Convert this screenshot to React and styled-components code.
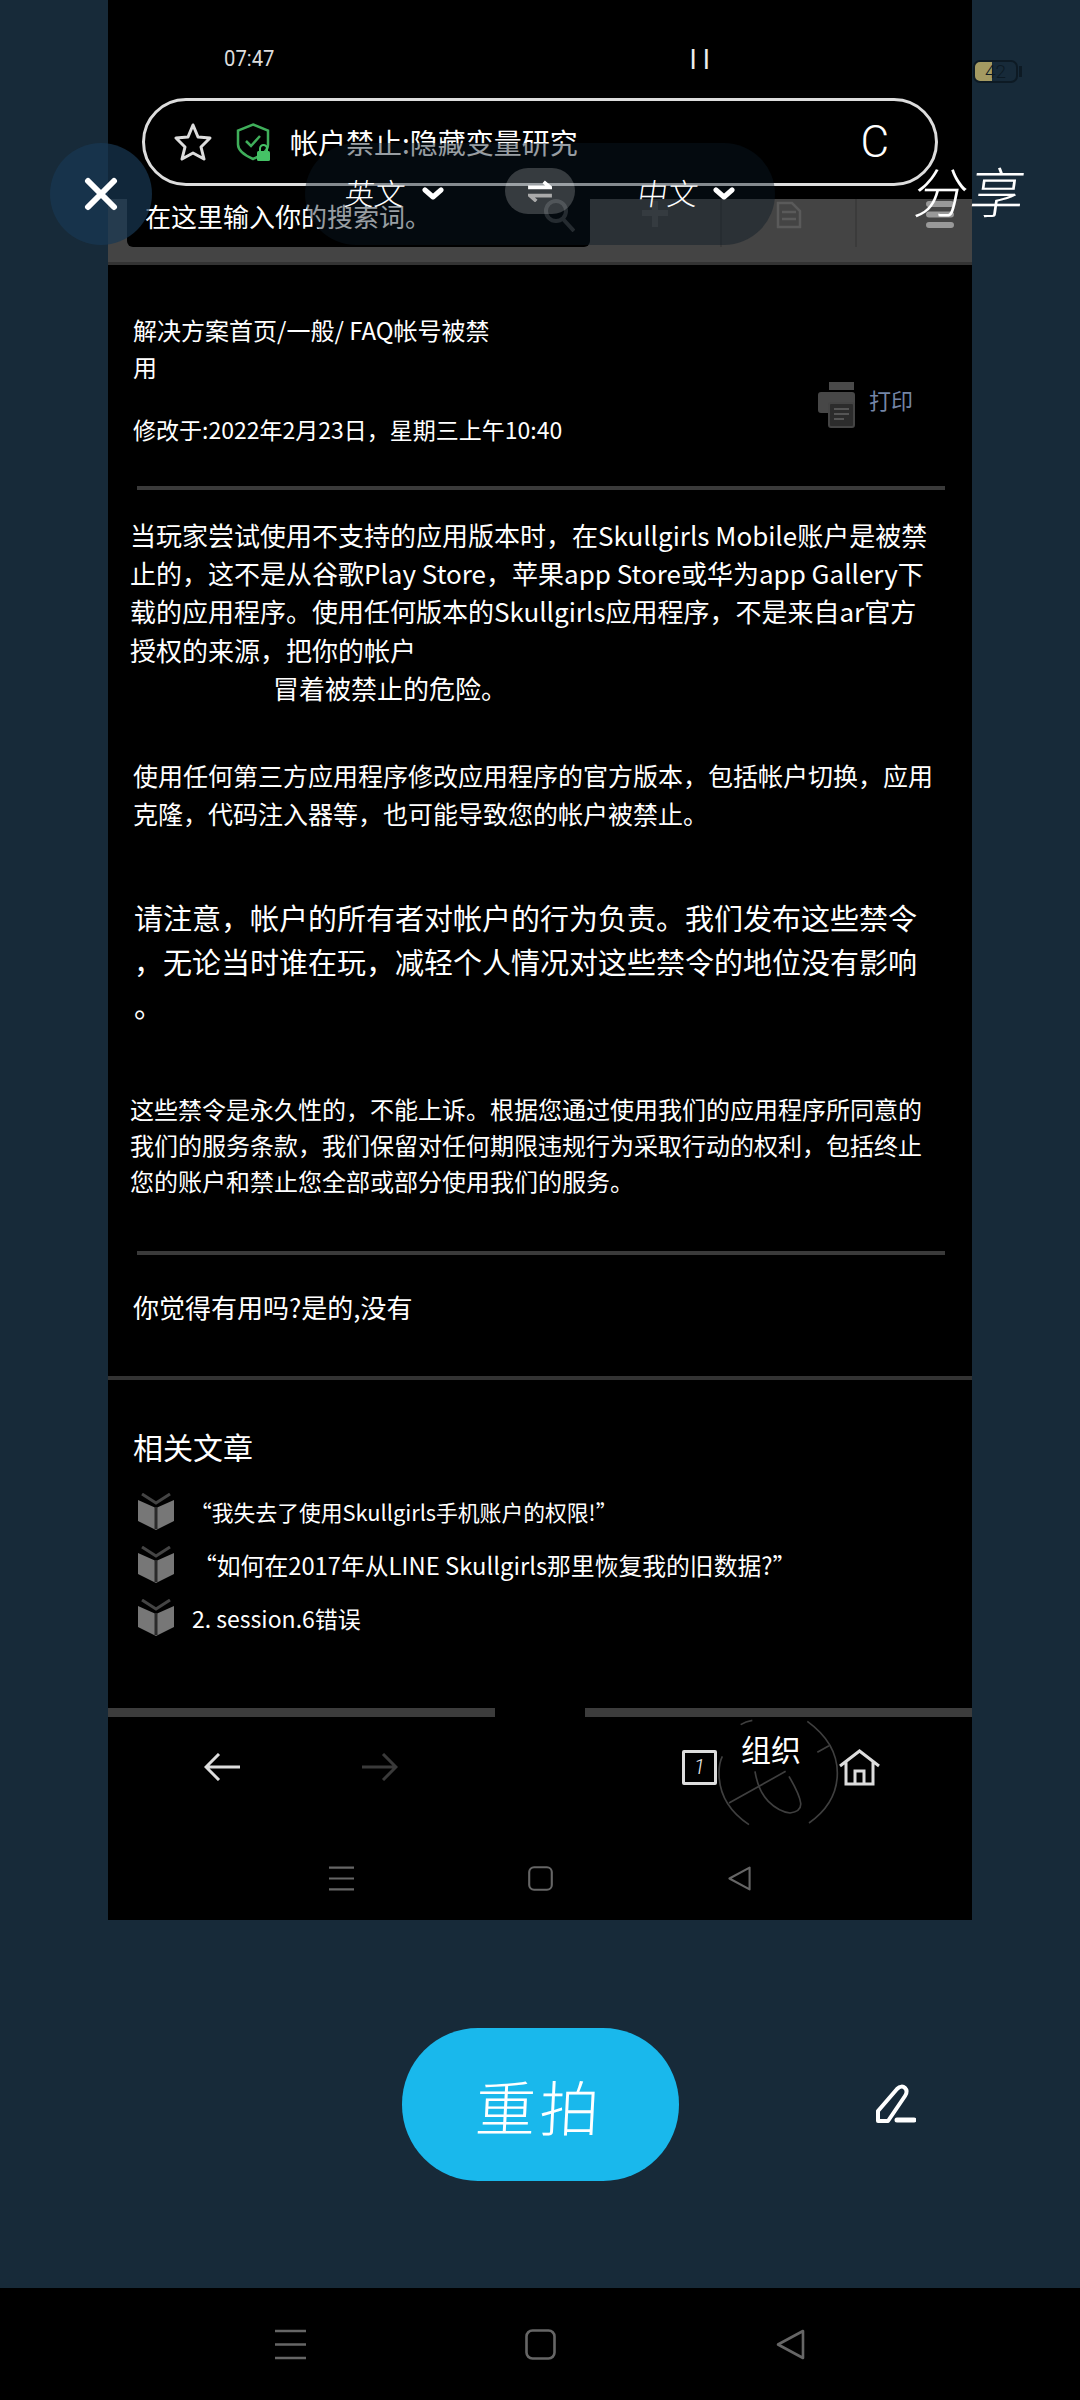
import React from "react";
import styled, { createGlobalStyle } from "styled-components";

const GlobalStyle = createGlobalStyle`
  html, body {
    margin: 0;
    padding: 0;
    background: #172a39;
  }
  body {
    font-family: "Noto Sans CJK SC", "Noto Sans", sans-serif;
    color: #fff;
  }
`;

const Page = styled.div`
  width: 1080px;
  height: 2400px;
  display: flex;
  flex-direction: column;
  overflow: hidden;
  background: #172a39;
`;

const Stage = styled.div`
  position: relative;
  height: 1920px;
  display: flex;
  justify-content: center;
`;

const Screen = styled.div`
  width: 864px;
  height: 1920px;
  background: #000;
  display: flex;
  flex-direction: column;
`;

const StatusBar = styled.div`
  height: 199px;
  flex: none;
  box-sizing: border-box;
  padding: 43px 0 0 116px;
  display: flex;
  align-items: flex-start;
`;

const Clock = styled.span`
  width: 466px;
  font: 22px/32px Roboto, sans-serif;
  color: #ddd;
  transform: scaleX(0.92);
  transform-origin: left;
`;

const PauseMark = styled.span`
  font: 300 28px/34px "Liberation Sans", sans-serif;
  letter-spacing: 7px;
  color: #eee;
`;

const Toolbar = styled.div`
  height: 66px;
  flex: none;
  box-sizing: border-box;
  background: #444;
  border-bottom: 3px solid #333;
  padding-left: 19px;
  display: flex;
  align-items: flex-start;
`;

const SearchBox = styled.div`
  width: 463px;
  height: 48px;
  flex: none;
  box-sizing: border-box;
  background: #000;
  border-radius: 0 0 6px 6px;
  padding: 0 15px 0 18px;
  display: flex;
  justify-content: space-between;
  font-size: 26px;
  line-height: 34px;
`;

const ToolCell = styled.div`
  width: ${(p) => p.$width}px;
  height: 48px;
  box-sizing: border-box;
  display: flex;
  justify-content: center;
  padding: 2px 0 0 ${(p) => p.$shift || 0}px;
  border-right: ${(p) => (p.$last ? "none" : "2px solid #3b3b3b")};
`;

const Article = styled.main`
  flex: 1;
  display: flex;
  flex-direction: column;
`;

const MetaRow = styled.div`
  display: flex;
  justify-content: space-between;
  padding: 46px 59px 0 25px;
`;

const Crumbs = styled.div`
  font-size: 24px;
  line-height: 37px;
  white-space: nowrap;
`;

const Modified = styled.div`
  margin-top: 26px;
  font-size: 23px;
`;

const PrintLink = styled.div`
  display: flex;
  gap: 14px;
  margin-top: 71px;
  font-size: 22px;
  line-height: 34px;
  color: #7485a6;
  height: 46px;
`;

const Divider = styled.hr`
  margin: ${(p) => p.$top}px 27px 0 29px;
  height: 4px;
  border: 0;
  background: #3a3a3a;
`;

const Paragraph = styled.p`
  margin: ${(p) => p.$top}px 0 0 ${(p) => p.$left}px;
  font-size: ${(p) => p.$size}px;
  line-height: ${(p) => p.$line}px;
  white-space: nowrap;
`;

const IndentedLine = styled.span`
  display: block;
  margin-left: 143px;
`;

const SectionRule = styled.div`
  margin-top: 50px;
  height: 4px;
  background: #333;
`;

const RelatedTitle = styled.h2`
  margin: 46px 0 19px 25px;
  font-size: 30px;
  font-weight: 400;
  line-height: 40px;
`;

const RelatedRow = styled.div`
  height: 53px;
  display: flex;
  align-items: center;
  padding-left: 29px;
  font-size: ${(p) => p.$size}px;
  white-space: nowrap;
`;

const RowText = styled.span`
  margin-left: ${(p) => p.$gap}px;
`;

const ScrollTrack = styled.div`
  margin-top: 64px;
  height: 9px;
  flex: none;
  display: flex;
  justify-content: space-between;
`;

const ScrollPiece = styled.div`
  width: 387px;
  background: #3c3c3c;
`;

const BrowserNav = styled.nav`
  height: 100px;
  flex: none;
  display: flex;
  align-items: center;
  padding: 0 92px 0 96px;
`;

const ForwardSlot = styled.div`
  margin-left: 122px;
  margin-right: auto;
  display: flex;
`;

const TabCount = styled.div`
  width: 35px;
  height: 35px;
  box-sizing: border-box;
  border: 3px solid #ddd;
  border-radius: 2px;
  display: flex;
  align-items: center;
  justify-content: center;
  font: italic 300 20px/1 Roboto, sans-serif;
  color: #eee;
`;

const OrganizeButton = styled.div`
  position: relative;
  width: 122px;
  height: 104px;
  margin-top: 10px;
  box-sizing: border-box;
  padding: 7px 0 0 24px;
  font-size: 30px;
  line-height: 42px;
  white-space: nowrap;
`;

const OrganizeLabel = styled.span`
  position: relative;
`;

const OrganizeArt = styled.svg`
  position: absolute;
  left: -48px;
  top: -7px;
`;

const SoftKeys = styled.div`
  flex: 1;
  display: flex;
  align-items: center;
  justify-content: center;
  gap: ${(p) => p.$gap}px;
  padding-top: ${(p) => p.$pad}px;
`;

const AddressPill = styled.div`
  position: absolute;
  left: 142px;
  top: 98px;
  width: 796px;
  height: 88px;
  box-sizing: border-box;
  border: 3px solid #ddd;
  border-radius: 44px;
  display: flex;
  align-items: center;
  padding: 0 46px 0 29px;
`;

const ShieldSlot = styled.span`
  margin-left: 24px;
  display: flex;
`;

const PageTitle = styled.span`
  margin-left: 18px;
  font-size: 28px;
  white-space: nowrap;
  color: #fff;
`;

const Reload = styled.span`
  margin-left: auto;
  font: 300 44px/1 Roboto, sans-serif;
`;

const CloseDisc = styled.div`
  position: absolute;
  left: 50px;
  top: 143px;
  width: 102px;
  height: 102px;
  border-radius: 50%;
  background: rgba(24, 56, 82, 0.7);
  display: flex;
  align-items: center;
  justify-content: center;
`;

const LanguageBar = styled.div`
  position: absolute;
  left: 305px;
  top: 143px;
  width: 470px;
  height: 102px;
  border-radius: 51px;
  background: rgba(10, 25, 35, 0.42);
  display: flex;
  align-items: center;
  padding-left: 40px;
  box-sizing: border-box;
`;

const LanguageName = styled.span`
  font-size: 30px;
  font-weight: 300;
  line-height: 1;
  margin-top: -4px;
  width: ${(p) => p.$width}px;
  flex: none;
  transform: skewX(-8deg);
`;

const SwapButton = styled.div`
  width: 70px;
  height: 46px;
  margin: -6px 63px 0 61px;
  flex: none;
  border-radius: 23px;
  background: rgba(255, 255, 255, 0.2);
  display: flex;
  align-items: center;
  justify-content: center;
`;

const ShareLabel = styled.span`
  position: absolute;
  left: 915px;
  top: 156px;
  font-size: 54px;
  font-weight: 300;
  line-height: 68px;
  letter-spacing: 2px;
  white-space: nowrap;
  transform: skewX(-8deg);
`;

const BatteryShell = styled.div`
  position: absolute;
  left: 973px;
  top: 60px;
  width: 45px;
  height: 23px;
  box-sizing: border-box;
  border: 2px solid #0d1a24;
  border-radius: 7px;
  background: linear-gradient(90deg, #a49a62 0 42%, #172a39 42% 100%);
  font: 300 19px/19px Roboto, sans-serif;
  text-align: center;
  color: #0d1a24;

  &::after {
    content: "";
    position: absolute;
    right: -6px;
    top: 4px;
    width: 3px;
    height: 11px;
    background: #0d1a24;
  }
`;

const ActionArea = styled.section`
  height: 368px;
  flex: none;
  display: grid;
  grid-template-columns: 1fr 277px 1fr;
  align-items: center;
`;

const RetakeButton = styled.button`
  grid-column: 2;
  height: 153px;
  border: 0;
  border-radius: 76px;
  background: #19b8ec;
  color: #fff;
  font-family: inherit;
  font-size: 60px;
  font-weight: 300;
  letter-spacing: 4px;
  padding: 0;
`;

const RetakeText = styled.span`
  display: inline-block;
  transform: skewX(-3deg);
`;

const PencilSlot = styled.div`
  margin-left: 196px;
  display: flex;
`;

const SystemBar = styled.footer`
  flex: 1;
  background: #000;
  display: flex;
`;

const ArrowIcon = ({ color, flip }) => (
  <svg width="36" height="28" viewBox="0 0 36 28" fill="none" stroke={color} strokeWidth="3">
    <path d={flip ? "M0 14H34M21 1l13 13-13 13" : "M36 14H2M15 1L2 14l13 13"} />
  </svg>
);

const SoftKeyIcons = ({ size, gap, pad }) => (
  <SoftKeys $gap={gap} $pad={pad}>
    <svg width={size} height={size} viewBox="0 0 31 31" fill="none" stroke="#666" strokeWidth="2.6">
      <path d="M0 2h31M0 15.5h31M0 29h31" />
    </svg>
    <svg width={size} height={size} viewBox="0 0 31 31" fill="none" stroke="#666" strokeWidth="2.6">
      <rect x="1.5" y="1.5" width="28" height="28" rx="6" />
    </svg>
    <svg width={size} height={size} viewBox="0 0 31 31" fill="none" stroke="#666" strokeWidth="2.6" strokeLinejoin="round">
      <path d="M28 2v27L3 15.5z" />
    </svg>
  </SoftKeys>
);

const BookIcon = () => (
  <svg width="38" height="38" viewBox="0 0 38 38">
    <path d="M1 7l18 8 18-8v21l-18 9-18-9z" fill="#777" />
    <path d="M5 1l14 9 14-9" fill="none" stroke="#444" strokeWidth="3" />
    <path d="M19 14v22" stroke="#2a2a2a" strokeWidth="3" />
  </svg>
);

const PrinterIcon = () => (
  <svg width="37" height="46" viewBox="0 0 37 46">
    <rect x="11" y="0" width="25" height="8" fill="#4a4a4a" />
    <rect x="0" y="10" width="37" height="21" rx="3" fill="#474747" />
    <rect x="11" y="21" width="25" height="24" rx="2" fill="#2c2c2c" stroke="#444" strokeWidth="2" />
    <path d="M16 27h15M16 32h15M16 37h10" stroke="#555" strokeWidth="2" />
  </svg>
);

const StarIcon = () => (
  <svg width="38" height="40" viewBox="0 0 38 40" fill="none" stroke="#ddd" strokeWidth="3" strokeLinejoin="round">
    <path d="M19 3l5 12 12 1-9 9 3 12-11-6-11 6 3-12-9-9 12-1z" />
  </svg>
);

const ShieldIcon = () => (
  <svg width="36" height="38" viewBox="0 0 36 38" fill="none">
    <path d="M17 1.5l15 6v14c0 6-6 11-15 14.500C8 32 2 27 2 21.500v-14z" stroke="#3fae5a" strokeWidth="2.500" />
    <path d="M10 18l5 5 9-10" stroke="#3fae5a" strokeWidth="2.500" />
    <rect x="21" y="28" width="13" height="10" rx="1.500" fill="#45c266" />
    <path d="M24 28v-2.500a3.500 3.500 0 0 1 7 0V28" stroke="#45c266" strokeWidth="2" />
  </svg>
);

const SearchGlyph = () => (
  <svg width="32" height="33" viewBox="0 0 32 33" fill="none" stroke="#3a3a3a" strokeWidth="4">
    <circle cx="13" cy="12" r="10" />
    <path d="M20 20l11 12" />
  </svg>
);

const PlusGlyph = () => (
  <svg width="26" height="26" viewBox="0 0 26 26" stroke="#555" strokeWidth="6">
    <path d="M13 0v26M0 12h26" />
  </svg>
);

const DocGlyph = () => (
  <svg width="26" height="28" viewBox="0 0 26 28" fill="none" stroke="#5a5a5a" strokeWidth="2.500">
    <path d="M2 2h14l8 8v16H2zM6 11h14M6 18h14" />
  </svg>
);

const MenuGlyph = () => (
  <svg width="28" height="27" viewBox="0 0 28 27" stroke="#999" strokeWidth="6" strokeLinecap="round">
    <path d="M3 3h22M3 13.500h22M3 24h22" />
  </svg>
);

const Chevron = () => (
  <svg width="22" height="14" viewBox="0 0 22 14" fill="none" stroke="#fff" strokeWidth="5" strokeLinecap="round" strokeLinejoin="round">
    <path d="M3 3l8 7 8-7" />
  </svg>
);

const SwapGlyph = () => (
  <svg width="24" height="22" viewBox="0 0 26 24" fill="none" strokeWidth="4">
    <path d="M0 8h24L17 2" stroke="#fff" />
    <path d="M26 17H2l7 6" stroke="#aaa" />
  </svg>
);

const HomeIcon = () => (
  <svg width="41" height="37" viewBox="0 0 41 37" fill="none" stroke="#ddd" strokeWidth="3">
    <path d="M1 17L20.500 2 40 17M7 13v22h27V13M16 35V22h9v13" />
  </svg>
);

const PencilIcon = () => (
  <svg width="41" height="40" viewBox="0 0 41 40" fill="none" stroke="#fff" strokeWidth="4" strokeLinejoin="round">
    <path d="M3 37V27L22 5c3-3 6-3 8-1s2 5 0 8L13 37z" />
    <path d="M22 36h17" strokeLinecap="round" strokeWidth="5" />
  </svg>
);

export default function App() {
  return (
    <Page>
      <GlobalStyle />
      <Stage>
        <Screen>
          <StatusBar>
            <Clock>07:47</Clock>
            <PauseMark>ll</PauseMark>
          </StatusBar>
          <Toolbar>
            <SearchBox>
              <span>在这里输入你的搜索词。</span>
              <SearchGlyph />
            </SearchBox>
            <ToolCell $width={132}><PlusGlyph /></ToolCell>
            <ToolCell $width={135}><DocGlyph /></ToolCell>
            <ToolCell $width={115} $shift={50} $last><MenuGlyph /></ToolCell>
          </Toolbar>
          <Article>
            <MetaRow>
              <Crumbs>
                解决方案首页/一般/ FAQ帐号被禁<br />用
                <Modified>修改于:2022年2月23日，星期三上午10:40</Modified>
              </Crumbs>
              <PrintLink>
                <PrinterIcon />
                打印
              </PrintLink>
            </MetaRow>
            <Divider $top={38} />
            <Paragraph $top={26} $left={22} $size={26} $line={38.2}>
              当玩家尝试使用不支持的应用版本时，在Skullgirls Mobile账户是被禁<br />
              止的，这不是从谷歌Play Store，苹果app Store或华为app Gallery下<br />
              载的应用程序。使用任何版本的Skullgirls应用程序，不是来自ar官方<br />
              授权的来源，把你的帐户
              <IndentedLine>冒着被禁止的危险。</IndentedLine>
            </Paragraph>
            <Paragraph $top={49} $left={25} $size={25} $line={38}>
              使用任何第三方应用程序修改应用程序的官方版本，包括帐户切换，应用<br />
              克隆，代码注入器等，也可能导致您的帐户被禁止。
            </Paragraph>
            <Paragraph $top={63} $left={26} $size={29} $line={44}>
              请注意，帐户的所有者对帐户的行为负责。我们发布这些禁令<br />
              ，无论当时谁在玩，减轻个人情况对这些禁令的地位没有影响<br />
              。
            </Paragraph>
            <Paragraph $top={64} $left={22} $size={24} $line={36}>
              这些禁令是永久性的，不能上诉。根据您通过使用我们的应用程序所同意的<br />
              我们的服务条款，我们保留对任何期限违规行为采取行动的权利，包括终止<br />
              您的账户和禁止您全部或部分使用我们的服务。
            </Paragraph>
            <Divider $top={52} />
            <Paragraph $top={33} $left={25} $size={26} $line={38}>
              你觉得有用吗?是的,没有
            </Paragraph>
            <SectionRule />
            <RelatedTitle>相关文章</RelatedTitle>
            <RelatedRow $size={21.8}>
              <BookIcon />
              <RowText $gap={15}>“我失去了使用Skullgirls手机账户的权限!”</RowText>
            </RelatedRow>
            <RelatedRow $size={23.8}>
              <BookIcon />
              <RowText $gap={18}>“如何在2017年从LINE Skullgirls那里恢复我的旧数据?”</RowText>
            </RelatedRow>
            <RelatedRow $size={23}>
              <BookIcon />
              <RowText $gap={17}>2. session.6错误</RowText>
            </RelatedRow>
            <ScrollTrack>
              <ScrollPiece />
              <ScrollPiece />
            </ScrollTrack>
            <BrowserNav>
              <ArrowIcon color="#ddd" />
              <ForwardSlot>
                <ArrowIcon color="#3a3a3a" flip />
              </ForwardSlot>
              <TabCount>1</TabCount>
              <OrganizeButton>
                <OrganizeArt width="220" height="120" viewBox="0 0 660 360" fill="none" stroke="#3f3f3f" strokeWidth="5">
                  <path d="M215 35q15-10 35-13M415 25q90 65 90 155t-85 150M240 335q-90-60-90-155 0-30 10-50" />
                  <path d="M180 270l170-95M258 175q10 60 40 90t65 35q35-5 32-30t-35-80M445 118l35-20" />
                </OrganizeArt>
                <OrganizeLabel>组织</OrganizeLabel>
              </OrganizeButton>
              <HomeIcon />
            </BrowserNav>
            <SoftKeyIcons size={25} gap={174} pad={20} />
          </Article>
        </Screen>
        <AddressPill>
          <StarIcon />
          <ShieldSlot><ShieldIcon /></ShieldSlot>
          <PageTitle>帐户禁止:隐藏变量研究</PageTitle>
          <Reload>C</Reload>
        </AddressPill>
        <CloseDisc>
          <svg width="34" height="34" viewBox="0 0 34 34" stroke="#fff" strokeWidth="6" strokeLinecap="round">
            <path d="M4 4l26 26M30 4L4 30" />
          </svg>
        </CloseDisc>
        <LanguageBar>
          <LanguageName $width={77}>英文</LanguageName>
          <Chevron />
          <SwapButton><SwapGlyph /></SwapButton>
          <LanguageName $width={75}>中文</LanguageName>
          <Chevron />
        </LanguageBar>
        <ShareLabel>分享</ShareLabel>
        <BatteryShell>42</BatteryShell>
      </Stage>
      <ActionArea>
        <RetakeButton><RetakeText>重拍</RetakeText></RetakeButton>
        <PencilSlot><PencilIcon /></PencilSlot>
      </ActionArea>
      <SystemBar>
        <SoftKeyIcons size={31} gap={219} pad={0} />
      </SystemBar>
    </Page>
  );
}
